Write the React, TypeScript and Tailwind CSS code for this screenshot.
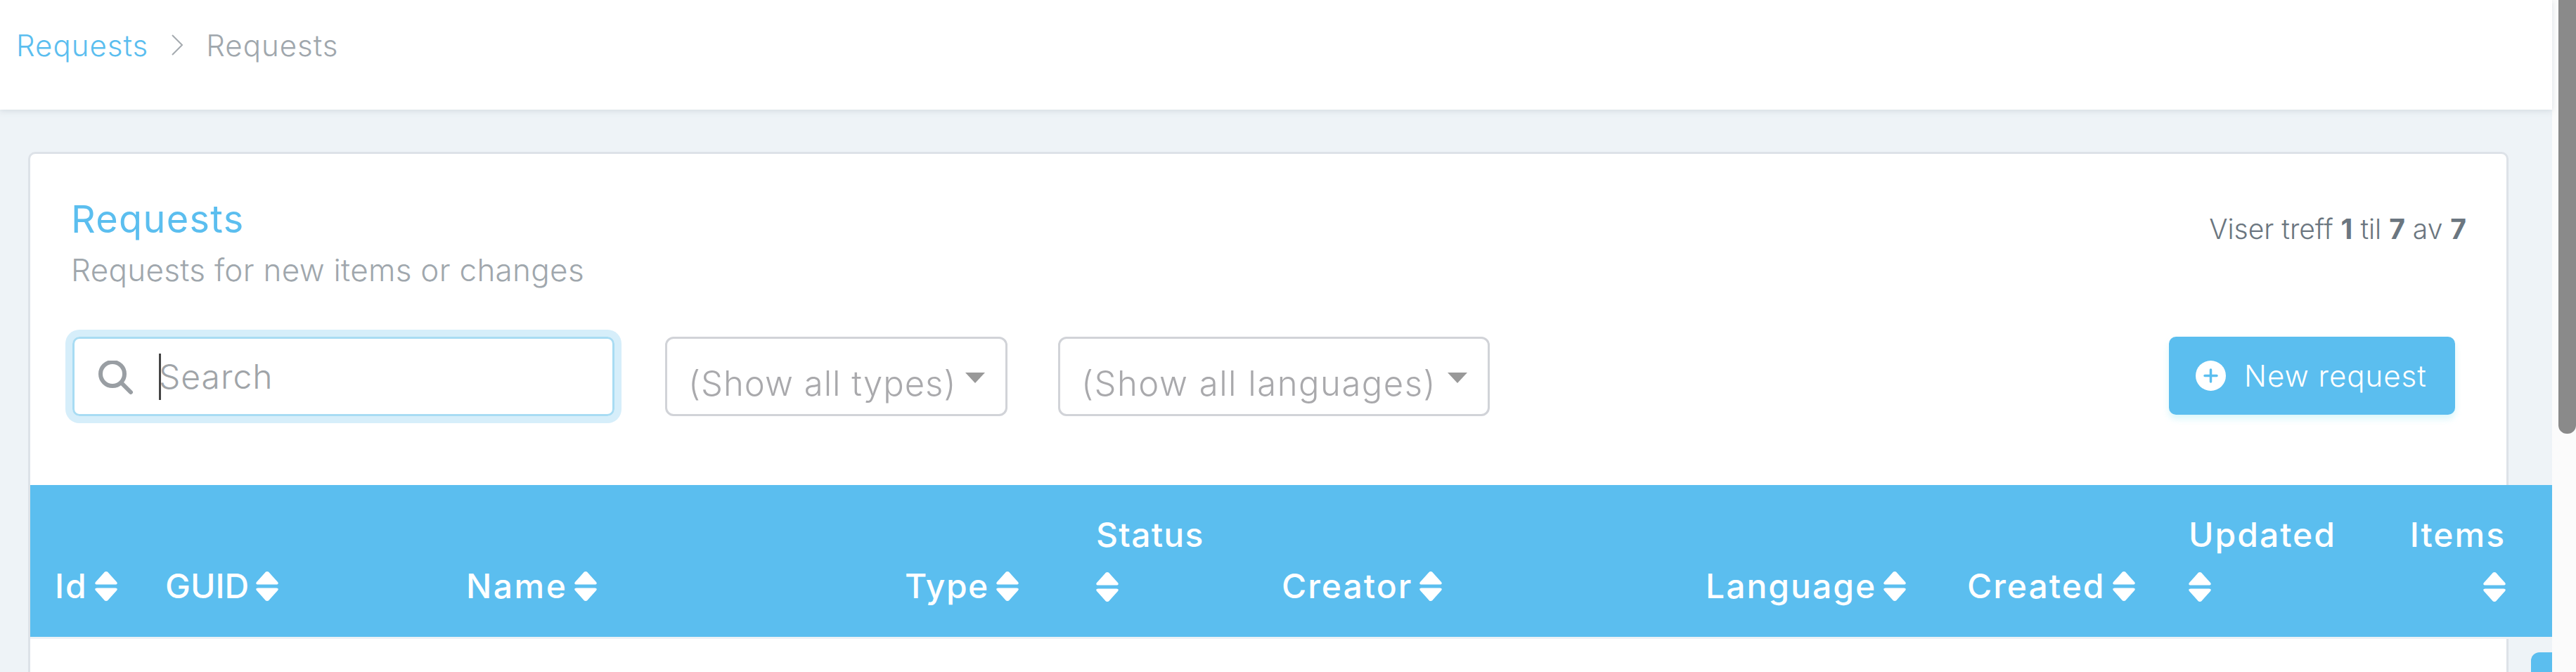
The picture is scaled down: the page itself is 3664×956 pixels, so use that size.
const sans = "font-['Inter','Liberation_Sans',sans-serif]";

function SortIcon() {
  return (
    <svg viewBox="0 0 32 42" className="inline-block w-[32px] h-[42px] shrink-0" fill="#fff">
      <path d="M16 0c1.500 0 2.600.8 3.300 2L31 15c1.600 2 .6 3.600-2 3.600H3C.4 18.600-.6 17 1 15L12.700 2C13.400.8 14.500 0 16 0z" />
      <path d="M16 42c1.500 0 2.600-.8 3.300-2L31 27c1.600-2 .6-3.600-2-3.600H3C.4 23.400-.6 25 1 27l11.700 13c.7 1.200 1.800 2 3.300 2z" />
    </svg>
  );
}

function Th({ label, width, stacked, right, tracking = "tracking-[2px]" }: { label: string; width: string; stacked?: boolean; right?: boolean; tracking?: string }) {
  return (
    <div className={`${width} shrink-0 flex ${stacked ? "flex-col gap-[31px]" : "items-center gap-[10px]"} ${right ? "items-end" : ""}`}>
      <span className={`leading-[44px] ${tracking}`}>{label}</span>
      <SortIcon />
    </div>
  );
}

function Select({ label, width, tracking }: { label: string; width: string; tracking: string }) {
  return (
    <div className={`${width} h-[113px] shrink-0 flex items-center justify-between border-[3px] border-[#d1d3d8] rounded-[12px] pl-[30px] pr-[29px] pt-[20px]`}>
      <span className={`text-[49px] font-light text-[#a9a9ac] ${tracking} whitespace-nowrap`}>{label}</span>
      <span className="w-0 h-0 border-l-[14px] border-r-[14px] border-t-[15px] border-l-transparent border-r-transparent border-t-[#999999] mb-[17px]" />
    </div>
  );
}

export default function App() {
  return (
    <div className={`${sans} w-[3664px] h-[956px] overflow-hidden flex bg-[#fbfbfb]`}>
      <div className="w-[3630px] shrink-0 flex flex-col">
        <header className="h-[156px] shrink-0 bg-white flex items-center gap-[32px] pl-[23px] pb-[28px] text-[42px] font-light shadow-[0_2px_8px_rgba(180,190,200,0.45)] relative">
          <span className="text-[#5bbeef] tracking-[1px]">Requests</span>
          <svg viewBox="0 0 18 30" className="w-[18px] h-[30px]" fill="none" stroke="#a5abb0" strokeWidth="2">
            <path d="M2 1l14 14L2 29" />
          </svg>
          <span className="text-[#a0a7ad] tracking-[1px]">Requests</span>
        </header>
        <main className="flex-1 bg-[#eef3f7] pt-[60px] pl-[40px] overflow-hidden">
          <section className="w-[3528px] h-[800px] bg-white border-[3px] border-[#dde2e8] border-b-0 rounded-t-[10px] flex flex-col">
            <div className="flex justify-between pl-[58px] pr-[57px] pt-[60px] h-[260px] shrink-0">
              <div>
                <h1 className="text-[54px] font-normal leading-[66px] text-[#5bbeef] tracking-[1.300px]">Requests</h1>
                <p className="mt-[9px] text-[44px] font-light leading-[60px] text-[#a0a7ad] tracking-[0.300px]">Requests for new items or changes</p>
              </div>
              <p className="text-[39px] font-light text-[#6b7680] leading-[48px] mt-[23px]">
                Viser treff <b className="font-bold">1</b> til <b className="font-bold">7</b> av <b className="font-bold">7</b>
              </p>
            </div>
            <div className="flex items-start pl-[60px] h-[211px] shrink-0">
              <div className="relative w-[771px] h-[113px] shrink-0 border-[3px] border-[#a8dcf3] rounded-[10px] shadow-[0_0_0_10px_#d6eefa] flex items-center">
                <svg viewBox="0 0 50 50" className="absolute left-[34px] top-[31px] w-[50px] h-[50px]" fill="none" stroke="#999ea3" strokeWidth="6" strokeLinecap="round">
                  <circle cx="20" cy="19" r="17" />
                  <path d="M33 32l13 13" />
                </svg>
                <input placeholder="Search" className="w-full h-full pl-[120px] bg-transparent outline-none text-[48px] font-light placeholder:text-[#a0a4a8] tracking-[1px]" />
                <span className="absolute left-[120px] top-[21px] w-[3px] h-[66px] bg-[#444]" />
              </div>
              <div className="ml-[72px]"><Select label="(Show all types)" width="w-[487px]" tracking="tracking-[1px]" /></div>
              <div className="ml-[72px]"><Select label="(Show all languages)" width="w-[614px]" tracking="tracking-[1.500px]" /></div>
              <button className="ml-auto mr-[73px] w-[407px] h-[111px] rounded-[10px] bg-[#5bbeef] shadow-[0_6px_10px_rgba(160,235,245,0.4)] text-white text-[42px] font-light flex items-center gap-[26px] pl-[38px]">
                <svg viewBox="0 0 43 43" className="w-[43px] h-[43px]">
                  <circle cx="21.500" cy="21.500" r="21.500" fill="#fff" />
                  <path d="M21.500 13v17M13 21.500h17" stroke="#5bbeef" strokeWidth="3.500" strokeLinecap="round" />
                </svg>
                <span className="tracking-[1px]">New request</span>
              </button>
            </div>
            <div className="w-[3587px] shrink-0 flex flex-col">
              <div className="h-[216px] bg-[#5bbeef] text-white text-[48px] font-medium flex items-end pl-[35px] pb-[50px]">
                <Th label="Id" width="w-[157px]" />
                <Th label="GUID" width="w-[428px]" tracking="tracking-[0px]" />
                <Th label="Name" width="w-[624px]" tracking="tracking-[2.500px]" />
                <Th label="Type" width="w-[272px]" tracking="tracking-[1.500px]" />
                <Th label="Status" width="w-[264px]" stacked tracking="tracking-[1.300px]" />
                <Th label="Creator" width="w-[603px]" />
                <Th label="Language" width="w-[372px]" />
                <Th label="Created" width="w-[315px]" />
                <Th label="Updated" width="w-[314px]" stacked />
                <Th label="Items" width="w-[137px]" stacked right />
              </div>
              <div className="h-[3px] bg-[#edf2f6]" />
              <div className="ml-[3557px] mt-[19px] w-[30px] h-[28px] bg-[#5bbeef] rounded-tl-[12px]" />
            </div>
          </section>
        </main>
      </div>
      <div className="flex-1 flex justify-end">
        <div className="w-[25px] h-[617px] bg-[#8a8a8a] rounded-b-[12px]" />
      </div>
    </div>
  );
}
